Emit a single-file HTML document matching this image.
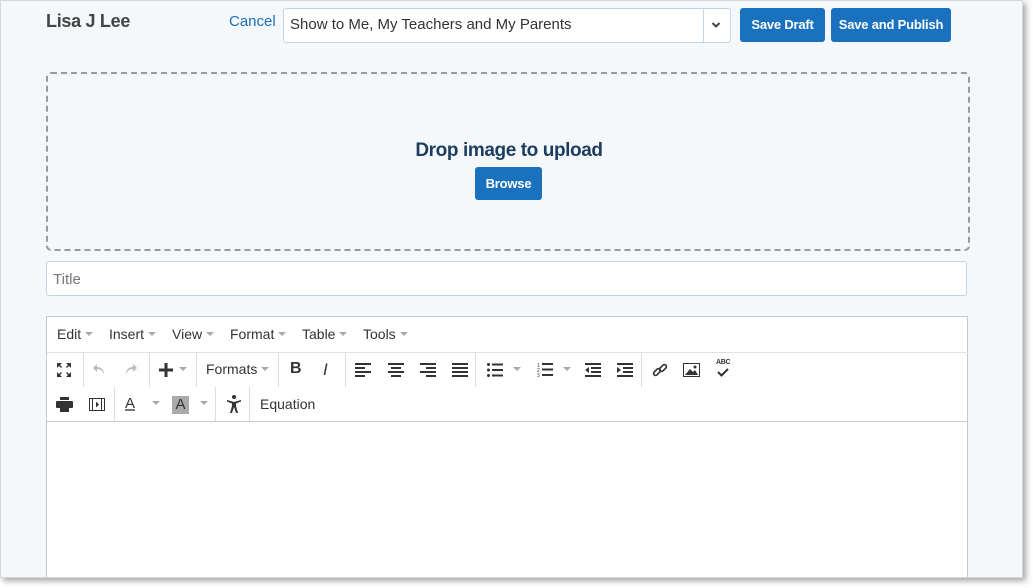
<!DOCTYPE html>
<html><head><meta charset="utf-8"><style>
*{box-sizing:border-box;margin:0;padding:0}
body{width:1033px;height:588px;background:#fff;position:relative;overflow:hidden;font-family:"Liberation Sans",sans-serif}
#win{position:absolute;left:0;top:0;width:1023px;height:578px;background:#f5f8fb;border:1px solid #d6d6d6;box-shadow:3px 3px 6px rgba(0,0,0,.35);overflow:hidden}
.a{position:absolute}
.btn{position:absolute;background:#1a72bf;color:#fff;font-weight:bold;font-size:13px;border-radius:3px;text-align:center;letter-spacing:-.2px}
.menu{position:absolute;top:9px;font-size:14px;color:#333}
.car{display:inline-block;width:0;height:0;border-left:4px solid transparent;border-right:4px solid transparent;border-top:4px solid #aaa;vertical-align:middle;margin-left:4px;margin-top:-2px}
.sep{position:absolute;width:1px;background:#ddd}
.ic{position:absolute}
</style></head><body>
<div id="win">
<div class="a" style="left:45px;top:10px;font-size:18px;font-weight:bold;color:#444;letter-spacing:-.3px">Lisa J Lee</div>
<div class="a" style="left:228px;top:12px;font-size:15px;color:#1a6fb5">Cancel</div>
<div class="a" style="left:282px;top:7px;width:448px;height:35px;background:#fff;border:1px solid #c3d4e5;border-radius:3px">
 <div class="a" style="left:6px;top:7px;font-size:15px;color:#333">Show to Me, My Teachers and My Parents</div>
 <div class="a" style="left:419px;top:0;width:1px;height:33px;background:#c3d4e5"></div>
 <svg class="a" style="left:427px;top:12px" width="10" height="8" viewBox="0 0 10 8"><path d="M1.5 2 L5 5.5 L8.5 2" stroke="#444" stroke-width="2" fill="none"/></svg>
</div>
<div class="btn" style="left:739px;top:7px;width:85px;height:34px;line-height:34px">Save Draft</div>
<div class="btn" style="left:830px;top:7px;width:120px;height:34px;line-height:34px">Save and Publish</div>
<div class="a" style="left:45px;top:71px;width:924px;height:179px;border:2px dashed #9a9a9a;border-radius:5px"></div>
<div class="a" style="left:300px;top:139px;width:416px;text-align:center;font-size:19px;font-weight:bold;color:#1c3d5e;letter-spacing:-.4px">Drop image to upload</div>
<div class="btn" style="left:474px;top:166px;width:67px;height:33px;line-height:33px">Browse</div>
<div class="a" style="left:45px;top:260px;width:921px;height:35px;background:#fff;border:1px solid #c3d4e5;border-radius:3px">
 <div class="a" style="left:6px;top:9px;font-size:15px;color:#777">Title</div>
</div>
<div class="a" style="left:45px;top:315px;width:922px;height:280px;background:#fff;border:1px solid #c9c9c9">
 <div class="menu" style="left:10px">Edit<span class="car"></span></div>
 <div class="menu" style="left:62px">Insert<span class="car"></span></div>
 <div class="menu" style="left:125px">View<span class="car"></span></div>
 <div class="menu" style="left:183px">Format<span class="car"></span></div>
 <div class="menu" style="left:255px">Table<span class="car"></span></div>
 <div class="menu" style="left:316px">Tools<span class="car"></span></div>
 <div class="a" style="left:0;top:35px;width:921px;height:1px;background:#e2e2e2"></div>
 <div class="a" style="left:0;top:104px;width:921px;height:1px;background:#c9c9c9"></div>
 <div class="sep" style="left:36px;top:36px;height:34px"></div>
 <div class="sep" style="left:102px;top:36px;height:34px"></div>
 <div class="sep" style="left:149px;top:36px;height:34px"></div>
 <div class="sep" style="left:231px;top:36px;height:34px"></div>
 <div class="sep" style="left:298px;top:36px;height:34px"></div>
 <div class="sep" style="left:428px;top:36px;height:34px"></div>
 <div class="sep" style="left:594px;top:36px;height:34px"></div>
 <div class="sep" style="left:67px;top:70px;height:34px"></div>
 <div class="sep" style="left:168px;top:70px;height:34px"></div>
 <div class="sep" style="left:202px;top:70px;height:34px"></div>
 <svg class="ic" style="left:9px;top:45px" width="16" height="16" viewBox="0 0 16 16" fill="#333"><path d="M1 1h5l-2 2 2 2-1 1-2-2-2 2zM15 1v5l-2-2-2 2-1-1 2-2-2-2zM1 15v-5l2 2 2-2 1 1-2 2 2 2zM15 15h-5l2-2-2-2 1-1 2 2 2-2z"/></svg>
 <svg class="ic" style="left:45px;top:46px" width="14" height="13" viewBox="0 0 14 13"><path d="M5 1 L1 5 L5 9 V6 C9 6 11 8 12 12 C12 6 9 4 5 4Z" fill="#bbb"/></svg>
 <svg class="ic" style="left:77px;top:46px" width="14" height="13" viewBox="0 0 14 13"><path d="M9 1 L13 5 L9 9 V6 C5 6 3 8 2 12 C2 6 5 4 9 4Z" fill="#bbb"/></svg>
 <svg class="ic" style="left:112px;top:46px" width="14" height="14" viewBox="0 0 14 14"><path d="M5.5 0h3v5.5H14v3H8.5V14h-3V8.5H0v-3h5.5z" fill="#333"/></svg>
 <span class="car ic" style="left:128px;top:52px"></span>
 <div class="a" style="left:159px;top:44px;font-size:14px;color:#333">Formats<span class="car"></span></div>
 <div class="a" style="left:243px;top:43px;font-size:16px;font-weight:bold;color:#333">B</div>
 <div class="a" style="left:276px;top:43px;font-size:17px;font-style:italic;color:#333">I</div>
 <svg class="ic" style="left:308px;top:46px" width="16" height="14" fill="#333"><rect y="0" width="16" height="2"/><rect y="4" width="10" height="2"/><rect y="8" width="16" height="2"/><rect y="12" width="10" height="2"/></svg>
 <svg class="ic" style="left:341px;top:46px" width="16" height="14" fill="#333"><rect y="0" width="16" height="2"/><rect x="3" y="4" width="10" height="2"/><rect y="8" width="16" height="2"/><rect x="3" y="12" width="10" height="2"/></svg>
 <svg class="ic" style="left:373px;top:46px" width="16" height="14" fill="#333"><rect y="0" width="16" height="2"/><rect x="6" y="4" width="10" height="2"/><rect y="8" width="16" height="2"/><rect x="6" y="12" width="10" height="2"/></svg>
 <svg class="ic" style="left:405px;top:46px" width="16" height="14" fill="#333"><rect y="0" width="16" height="2"/><rect y="4" width="16" height="2"/><rect y="8" width="16" height="2"/><rect y="12" width="16" height="2"/></svg>
 <svg class="ic" style="left:440px;top:46px" width="16" height="14" fill="#333"><circle cx="1.5" cy="1.5" r="1.5"/><circle cx="1.5" cy="7" r="1.5"/><circle cx="1.5" cy="12.5" r="1.5"/><rect x="5" y="0.5" width="11" height="2"/><rect x="5" y="6" width="11" height="2"/><rect x="5" y="11.5" width="11" height="2"/></svg>
 <span class="car ic" style="left:462px;top:52px"></span>
 <svg class="ic" style="left:490px;top:45px" width="16" height="15" fill="#333"><text x="0" y="5" font-size="5" font-family="Liberation Sans">1</text><text x="0" y="10" font-size="5" font-family="Liberation Sans">2</text><text x="0" y="15" font-size="5" font-family="Liberation Sans">3</text><rect x="5" y="1" width="11" height="2"/><rect x="5" y="6.5" width="11" height="2"/><rect x="5" y="12" width="11" height="2"/></svg>
 <span class="car ic" style="left:512px;top:52px"></span>
 <svg class="ic" style="left:538px;top:46px" width="16" height="14" fill="#333"><rect y="0" width="16" height="2"/><rect x="6" y="4" width="10" height="2"/><rect x="6" y="8" width="10" height="2"/><rect y="12" width="16" height="2"/><path d="M4 4 V10 L0 7Z"/></svg>
 <svg class="ic" style="left:570px;top:46px" width="16" height="14" fill="#333"><rect y="0" width="16" height="2"/><rect x="6" y="4" width="10" height="2"/><rect x="6" y="8" width="10" height="2"/><rect y="12" width="16" height="2"/><path d="M0 4 V10 L4 7Z"/></svg>
 <svg class="ic" style="left:605px;top:45px" width="16" height="16" viewBox="0 0 16 16" fill="none" stroke="#333" stroke-width="1.6"><rect x="1" y="8" width="8" height="4" rx="2" transform="rotate(-45 5 10)"/><rect x="7" y="4" width="8" height="4" rx="2" transform="rotate(-45 11 6)"/></svg>
 <svg class="ic" style="left:636px;top:46px" width="17" height="14" viewBox="0 0 17 14"><rect x="0.5" y="0.5" width="16" height="13" fill="none" stroke="#333"/><path d="M2 12 L7 6 L10 9 L12 7 L15 12Z" fill="#333"/><circle cx="12" cy="4" r="1.5" fill="#333"/></svg>
 <div class="a" style="left:669px;top:42px;font-size:7px;font-weight:bold;color:#333;letter-spacing:-.3px">ABC</div>
 <svg class="ic" style="left:670px;top:51px" width="12" height="9"><path d="M1 4 L4.5 7.5 L11 1" stroke="#333" stroke-width="2" fill="none"/></svg>
 <svg class="ic" style="left:9px;top:80px" width="17" height="15" viewBox="0 0 17 15" fill="#333"><rect x="4" y="0" width="9" height="3"/><rect x="0" y="4" width="17" height="7" rx="1"/><rect x="4" y="9" width="9" height="6"/></svg>
 <svg class="ic" style="left:42px;top:81px" width="16" height="13" viewBox="0 0 16 13"><rect x="0.5" y="0.5" width="15" height="12" fill="none" stroke="#333"/><rect x="0.5" y="0.5" width="3" height="12" fill="none" stroke="#333"/><rect x="12.5" y="0.5" width="3" height="12" fill="none" stroke="#333"/><path d="M7 3.5 V9.5 L10 6.5Z" fill="#333"/></svg>
 <div class="a" style="left:78px;top:78px;font-size:15px;color:#333;text-decoration:underline;text-decoration-thickness:2px;text-decoration-color:#777">A</div>
 <span class="car ic" style="left:101px;top:86px"></span>
 <div class="a" style="left:125px;top:79px;width:17px;height:18px;background:#aaa;font-size:15px;color:#333;text-align:center;line-height:18px">A</div>
 <span class="car ic" style="left:149px;top:86px"></span>
 <svg class="ic" style="left:179px;top:78px" width="16" height="18" viewBox="0 0 16 18" fill="#333"><circle cx="8" cy="2" r="2"/><path d="M1 5 L8 7 L15 5 L15 6.5 L10 8.5 V11 L12 18 H10 L8 12 L6 18 H4 L6 11 V8.5 L1 6.5Z"/></svg>
 <div class="a" style="left:213px;top:79px;font-size:14px;color:#333">Equation</div>
</div>
</div>
</body></html>
